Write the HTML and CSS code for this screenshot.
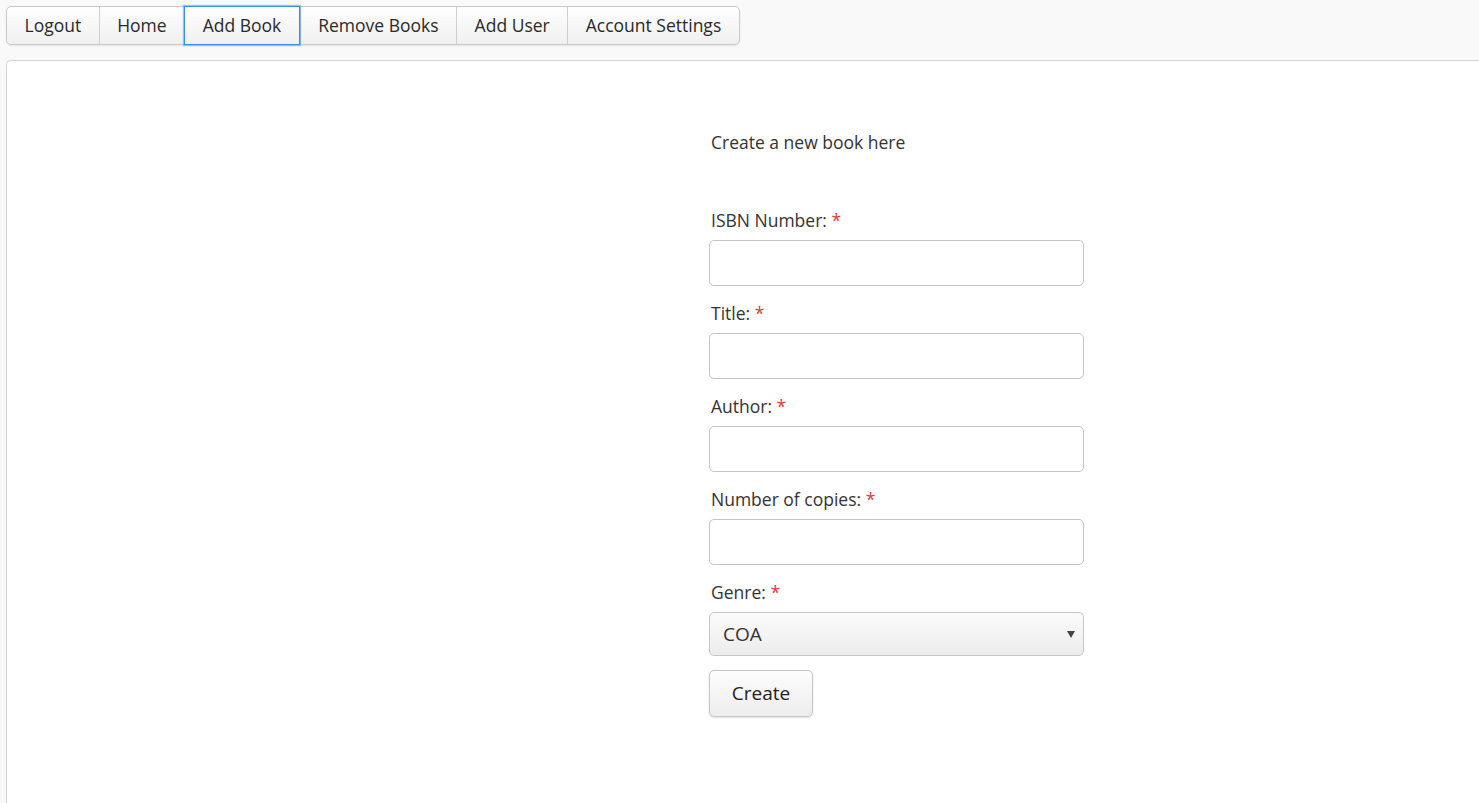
FILE: index.html
```html
<!DOCTYPE html>
<html lang="en">
<head>
<meta charset="utf-8">
<title>Add Book</title>
<link rel="stylesheet" href="styles.css">
</head>
<body>
<nav class="navbar">
  <div class="btn-group">
    <a class="nav-btn" href="#">Logout</a>
    <a class="nav-btn" href="#">Home</a>
    <a class="nav-btn active" href="#">Add Book</a>
    <a class="nav-btn" href="#">Remove Books</a>
    <a class="nav-btn" href="#">Add User</a>
    <a class="nav-btn" href="#">Account Settings</a>
  </div>
</nav>
<main class="panel">
  <form class="book-form">
    <p class="intro">Create a new book here</p>
    <div class="field">
      <label class="label">ISBN Number: <span class="req">*</span></label>
      <input class="input" type="text">
    </div>
    <div class="field">
      <label class="label">Title: <span class="req">*</span></label>
      <input class="input" type="text">
    </div>
    <div class="field">
      <label class="label">Author: <span class="req">*</span></label>
      <input class="input" type="text">
    </div>
    <div class="field">
      <label class="label">Number of copies: <span class="req">*</span></label>
      <input class="input" type="text">
    </div>
    <div class="field">
      <label class="label">Genre: <span class="req">*</span></label>
      <div class="select-wrap">
        <select class="select">
          <option>COA</option>
        </select>
      </div>
    </div>
    <button class="create-btn" type="button">Create</button>
  </form>
</main>
</body>
</html>
```

FILE: styles.css
```css
* { box-sizing: border-box; }
html, body {
  margin: 0;
  height: 100%;
  overflow: hidden;
}
body {
  background: #f9f9f9;
  font-family: "Open Sans", "DejaVu Sans", sans-serif;
  color: #333;
  padding: 6px 0 0 6px;
  display: flex;
  flex-direction: column;
}
.navbar {
  display: flex;
}
.btn-group {
  display: flex;
  height: 39px;
  border: 1px solid #c9c9c9;
  border-radius: 5px;
  background: linear-gradient(#fefefe, #f0f0f0);
  box-shadow: 0 1px 2px rgba(0,0,0,0.08);
}
.nav-btn {
  display: flex;
  align-items: center;
  padding: 0 17.5px 1px;
  font-size: 17.5px;
  color: #2a2a2a;
  text-decoration: none;
  border-left: 1px solid #cfcfcf;
}
.nav-btn:first-child {
  border-left: none;
  border-radius: 5px 0 0 5px;
}
.nav-btn:last-child {
  border-radius: 0 5px 5px 0;
}
.nav-btn.active {
  margin: -1px 0;
  border: 1px solid #3b8de6;
  box-shadow: 0 0 1px 1px rgba(80,150,230,0.55);
  padding: 0 17.5px 1px;
  position: relative;
}
.panel {
  flex: 1;
  margin-top: 15px;
  background: #fff;
  border: 1px solid #d3d3d3;
  border-right: none;
  border-bottom: none;
  border-top-left-radius: 5px;
  padding: 69px 0 0 702px;
}
.book-form {
  width: 375px;
}
.intro {
  margin: 0 0 54px 2px;
  font-size: 17.5px;
  line-height: 24px;
}
.field {
  margin-bottom: 15px;
}
.label {
  display: block;
  margin: 0 0 8px 2px;
  font-size: 17.5px;
  line-height: 24px;
}
.req {
  color: #e03a3a;
}
.input {
  display: block;
  width: 375px;
  height: 46px;
  border: 1px solid #c4c4c4;
  border-radius: 5px;
  background: #fff;
  font: inherit;
  padding: 0 12px;
}
.select-wrap {
  position: relative;
  width: 375px;
}
.select {
  display: block;
  width: 100%;
  height: 44px;
  appearance: none;
  -webkit-appearance: none;
  border: 1px solid #c6c6c6;
  border-radius: 5px;
  background: linear-gradient(#fbfbfb, #ececec);
  font-family: "Open Sans", "DejaVu Sans", sans-serif;
  font-size: 19px;
  color: #333;
  padding: 0 13px;
}
.select-wrap::after {
  content: "";
  position: absolute;
  right: 9px;
  top: 19px;
  border-left: 4px solid transparent;
  border-right: 4px solid transparent;
  border-top: 7px solid #444;
}
.field:last-of-type {
  margin-bottom: 14px;
}
.create-btn {
  display: block;
  width: 104px;
  height: 47px;
  border: 1px solid #c6c6c6;
  border-radius: 5px;
  background: linear-gradient(#fdfdfd, #ededed);
  box-shadow: 0 1px 2px rgba(0,0,0,0.12);
  font-family: "Open Sans", "DejaVu Sans", sans-serif;
  font-size: 19px;
  color: #222;
  padding: 0 0 2px;
}
```
